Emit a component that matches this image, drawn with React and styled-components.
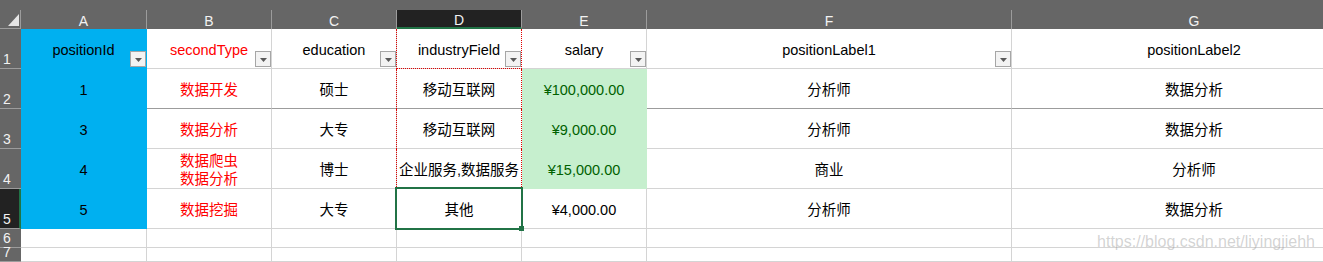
import React from 'react';
import styled, { createGlobalStyle, css } from 'styled-components';

const GRID = '#d4d4d4';
const HEAD = '#666666';
const HEAD_LINE = '#9c9c9c';
const SELECT_GREEN = '#217346';
const BLUE = '#00b0f0';
const GOOD_FILL = '#c6efce';
const GOOD_TEXT = '#006100';
const RED = '#ff0000';

const GlobalStyle = createGlobalStyle`
  html, body {
    margin: 0;
    padding: 0;
    background: #fff;
    overflow: hidden;
  }
  body {
    font-family: "Liberation Sans", "Noto Sans CJK SC", sans-serif;
  }
`;

const Page = styled.div`
  position: relative;
  width: 1323px;
  height: 262px;
  overflow: hidden;
`;

const Sheet = styled.div`
  display: grid;
  grid-template-columns: 21px 126px 125px 125px 125px 125px 365px 365px;
  grid-template-rows: 29px repeat(5, 40px) 19px 14px;
  width: max-content;
  font-size: 14.5px;
  color: #000;
`;

const Corner = styled.div`
  background: ${HEAD};
  padding-top: 10px;
  box-sizing: border-box;
  display: flex;
`;

const CornerInner = styled.div`
  flex: 1;
  box-sizing: border-box;
  border-right: 1px solid ${HEAD_LINE};
  border-bottom: 1px solid ${HEAD_LINE};
  display: flex;
  align-items: flex-end;
  justify-content: flex-end;
  padding: 0 1px 2px 0;
`;

const ColHead = styled.div`
  background: ${HEAD};
  padding-top: 10px;
  box-sizing: border-box;
  display: flex;
`;

const ColLabel = styled.div`
  flex: 1;
  display: flex;
  align-items: center;
  justify-content: center;
  box-sizing: border-box;
  border-right: 1px solid ${HEAD_LINE};
  padding-top: 2px;
  font-size: 14px;
  color: #f2f2f2;
  ${({ $active }) =>
    $active &&
    css`
      background: #222;
      border-bottom: 2px solid ${SELECT_GREEN};
    `}
`;

const RowHead = styled.div`
  background: ${({ $active }) => ($active ? '#222' : HEAD)};
  border-bottom: 1px solid ${HEAD_LINE};
  ${({ $active }) => $active && css`border-right: 2px solid ${SELECT_GREEN};`}
  box-sizing: border-box;
  display: flex;
  align-items: flex-end;
  padding: 0 0 1px 3px;
  font-size: 14px;
  line-height: 16px;
  color: #f2f2f2;
`;

const Cell = styled.div`
  position: relative;
  box-sizing: border-box;
  display: flex;
  flex-direction: column;
  align-items: center;
  justify-content: center;
  padding-top: 3px;
  line-height: 18px;
  white-space: nowrap;
  background: ${({ $fill }) => $fill || '#fff'};
  color: ${({ $tone }) => $tone || '#000'};
  border-right: 1px solid ${({ $fill }) => $fill || GRID};
  border-bottom: 1px solid
    ${({ $fill, $freeze }) => $fill || ($freeze ? '#9c9c9c' : GRID)};

  ${({ $marquee, $marqueeBottom }) =>
    $marquee &&
    css`
      border-right-color: #fff;
      &::after {
        content: '';
        position: absolute;
        top: 0;
        bottom: -1px;
        left: -1px;
        right: -1px;
        border-left: 1px dotted #e00000;
        border-right: 1px dotted #e00000;
        ${$marqueeBottom && 'border-bottom: 1px dotted #e00000;'}
        pointer-events: none;
      }
    `}

  ${({ $selected }) =>
    $selected &&
    css`
      &::after {
        content: '';
        position: absolute;
        top: -2px;
        left: -2px;
        right: -2px;
        bottom: -2px;
        border: 2px solid ${SELECT_GREEN};
        z-index: 2;
        pointer-events: none;
      }
    `}
`;

const Handle = styled.span`
  position: absolute;
  right: -3px;
  bottom: -3px;
  width: 5px;
  height: 5px;
  background: ${SELECT_GREEN};
  z-index: 3;
`;

const FilterButton = styled.span`
  position: absolute;
  right: 0;
  bottom: 1px;
  width: 16px;
  height: 16px;
  box-sizing: border-box;
  border: 1px solid #a6a6a6;
  background: #f3f3f3;
  display: flex;
  align-items: center;
  justify-content: center;
  padding-top: 1px;
`;

const Watermark = styled.div`
  position: absolute;
  right: 8px;
  top: 234px;
  font-family: "Liberation Sans", sans-serif;
  font-size: 16px;
  line-height: 1;
  color: rgba(150, 150, 150, 0.42);
  pointer-events: none;
`;

const columns = ['A', 'B', 'C', 'D', 'E', 'F', 'G'];

const header = [
  { text: 'positionId', filter: true },
  { text: 'secondType', filter: true },
  { text: 'education', filter: true },
  { text: 'industryField', filter: true },
  { text: 'salary', filter: true },
  { text: 'positionLabel1', filter: true },
  { text: 'positionLabel2' },
];

const rows = [
  ['1', '数据开发', '硕士', '移动互联网', '¥100,000.00', '分析师', '数据分析'],
  ['3', '数据分析', '大专', '移动互联网', '¥9,000.00', '分析师', '数据分析'],
  ['4', ['数据爬虫', '数据分析'], '博士', '企业服务,数据服务', '¥15,000.00', '商业', '分析师'],
  ['5', '数据挖掘', '大专', '其他', '¥4,000.00', '分析师', '数据分析'],
];

// r: 0 = header row (sheet row 1), 1..4 = data rows
function cellLook(col, r) {
  const look = {};
  if (col === 0 && r <= 4) look.$fill = BLUE;
  if (col === 1 && r <= 4) look.$tone = RED;
  if (col === 4 && r >= 1 && r <= 3) {
    look.$fill = GOOD_FILL;
    look.$tone = GOOD_TEXT;
  }
  if (col === 3 && r <= 3) {
    look.$marquee = true;
    look.$marqueeBottom = r === 0;
  }
  if (col === 3 && r === 4) look.$selected = true;
  if (r === 1) look.$freeze = true;
  return look;
}

function FilterArrow() {
  return (
    <FilterButton>
      <svg width="7" height="4" viewBox="0 0 7 4">
        <polygon points="0,0 7,0 3.5,4" fill="#595959" />
      </svg>
    </FilterButton>
  );
}

function renderText(value) {
  if (Array.isArray(value)) {
    return value.map((line) => <span key={line}>{line}</span>);
  }
  return value;
}

export default function App() {
  return (
    <Page>
      <GlobalStyle />
      <Sheet>
        <Corner>
          <CornerInner>
            <svg width="11" height="12" viewBox="0 0 11 12">
              <polygon points="11,0 11,12 0,12" fill="#e6e6e6" />
            </svg>
          </CornerInner>
        </Corner>
        {columns.map((c) => (
          <ColHead key={c}>
            <ColLabel $active={c === 'D'}>{c}</ColLabel>
          </ColHead>
        ))}

        <RowHead>1</RowHead>
        {header.map((h, i) => (
          <Cell key={h.text} {...cellLook(i, 0)}>
            {h.text}
            {h.filter && <FilterArrow />}
          </Cell>
        ))}

        {rows.map((row, ri) => (
          <React.Fragment key={ri}>
            <RowHead $active={ri === 3}>{ri + 2}</RowHead>
            {row.map((value, ci) => {
              const look = cellLook(ci, ri + 1);
              return (
                <Cell key={ci} {...look}>
                  {renderText(value)}
                  {look.$selected && <Handle />}
                </Cell>
              );
            })}
          </React.Fragment>
        ))}

        {[6, 7].map((n) => (
          <React.Fragment key={n}>
            <RowHead>{n}</RowHead>
            {columns.map((c) => (
              <Cell key={c} />
            ))}
          </React.Fragment>
        ))}
      </Sheet>
      <Watermark>https://blog.csdn.net/liyingjiehh</Watermark>
    </Page>
  );
}
